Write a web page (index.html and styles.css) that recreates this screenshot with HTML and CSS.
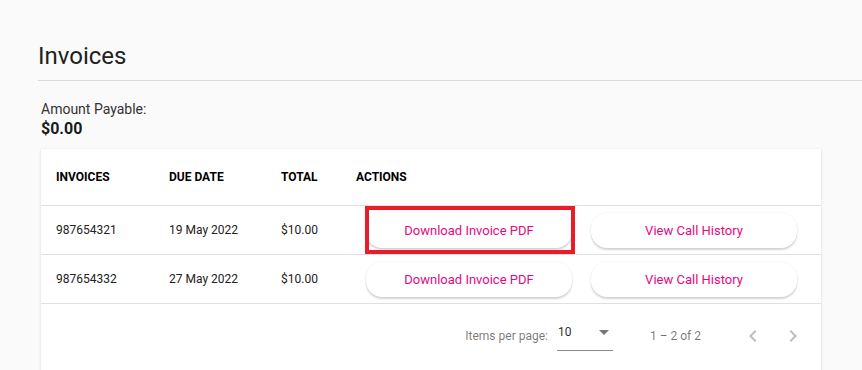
FILE: index.html
```html
<!DOCTYPE html>
<html lang="en">
<head>
<meta charset="utf-8">
<title>Invoices</title>
<link rel="stylesheet" href="styles.css">
</head>
<body>
<h1 class="page-title">Invoices</h1>
<div class="content">
  <div class="amount-label">Amount Payable:</div>
  <div class="amount-value">$0.00</div>
  <div class="card">
    <table class="invoice-table">
      <thead>
        <tr>
          <th class="col-id">INVOICES</th>
          <th class="col-date">DUE DATE</th>
          <th class="col-total">TOTAL</th>
          <th class="col-actions">ACTIONS</th>
        </tr>
      </thead>
      <tbody>
        <tr>
          <td class="col-id">987654321</td>
          <td class="col-date">19 May 2022</td>
          <td class="col-total">$10.00</td>
          <td class="col-actions">
            <div class="actions">
              <span class="highlight-wrap">
                <button class="pill-btn">Download Invoice PDF</button>
                <span class="highlight"></span>
              </span>
              <button class="pill-btn">View Call History</button>
            </div>
          </td>
        </tr>
        <tr>
          <td class="col-id">987654332</td>
          <td class="col-date">27 May 2022</td>
          <td class="col-total">$10.00</td>
          <td class="col-actions">
            <div class="actions">
              <button class="pill-btn">Download Invoice PDF</button>
              <button class="pill-btn">View Call History</button>
            </div>
          </td>
        </tr>
      </tbody>
    </table>
    <div class="paginator">
      <span class="page-size-label">Items per page:</span>
      <div class="page-size-select">
        <span class="select-value">10</span>
        <span class="select-arrow"></span>
      </div>
      <span class="range-label">1 – 2 of 2</span>
      <button class="nav-btn" aria-label="Previous page">
        <svg viewBox="0 0 24 24" width="24" height="24"><path d="M15.41 7.41L14 6l-6 6 6 6 1.41-1.41L10.83 12z"/></svg>
      </button>
      <button class="nav-btn" aria-label="Next page">
        <svg viewBox="0 0 24 24" width="24" height="24"><path d="M10 6L8.59 7.41 13.17 12l-4.58 4.59L10 18l6-6z"/></svg>
      </button>
    </div>
  </div>
</div>
</body>
</html>
```
FILE: styles.css
```css
* { box-sizing: border-box; }

body {
  margin: 0;
  background: #fafafa;
  font-family: Roboto, "Liberation Sans", Arial, sans-serif;
  color: rgba(0, 0, 0, 0.87);
  height: 370px;
  overflow: hidden;
}

.page-title {
  margin: 40px 0 0 38px;
  padding-bottom: 8px;
  font-size: 24px;
  line-height: 32px;
  font-weight: 400;
  color: #212121;
  border-bottom: 1px solid #dcdcdc;
}

.content {
  margin: 0 41px;
}

.amount-label {
  margin-top: 18px;
  font-size: 14px;
  line-height: 20px;
  color: #333;
}

.amount-value {
  font-size: 16px;
  line-height: 20px;
  font-weight: 700;
  color: #1a1a1a;
}

.card {
  margin-top: 10px;
  background: #fff;
  box-shadow: 0 1px 3px rgba(0, 0, 0, 0.12), 0 1px 1px rgba(0, 0, 0, 0.06);
  padding-bottom: 6px;
}

.invoice-table {
  width: 100%;
  border-collapse: separate;
  border-spacing: 0;
  table-layout: fixed;
}

.invoice-table th,
.invoice-table td {
  padding: 0;
  text-align: left;
  border-bottom: 1px solid #e0e0e0;
}

.invoice-table th {
  height: 57px;
  font-size: 12px;
  font-weight: 700;
  color: #000;
}

.invoice-table td {
  height: 49px;
  font-size: 12px;
  color: #222;
}

.col-id { width: 128px; padding-left: 15px !important; }
.col-date { width: 112px; }
.col-total { width: 75px; }

.actions {
  display: flex;
  gap: 19px;
  padding-left: 10px;
}

.pill-btn {
  width: 206px;
  height: 35px;
  border: none;
  border-radius: 16px;
  background: #fff;
  box-shadow: 0 2px 2px rgba(0, 0, 0, 0.16), 0 0 2px rgba(0, 0, 0, 0.08);
  font-family: Roboto, "Liberation Sans", Arial, sans-serif;
  font-size: 13px;
  color: #e5097f;
  padding: 0;
  cursor: pointer;
}

.highlight-wrap {
  position: relative;
  display: inline-flex;
}

.highlight {
  position: absolute;
  left: -1px;
  right: -3px;
  top: -7px;
  bottom: -6px;
  border: 4px solid #ea1c2a;
  pointer-events: none;
}

.paginator {
  display: flex;
  align-items: center;
  justify-content: flex-end;
  height: 64px;
  padding-right: 8px;
  font-size: 12px;
  color: rgba(0, 0, 0, 0.54);
}

.page-size-label {
  margin-right: 9px;
}

.page-size-select {
  position: relative;
  width: 56px;
  height: 26px;
  margin-top: 4px;
  border-bottom: 1px solid #8a8a8a;
  display: flex;
  align-items: flex-start;
  justify-content: space-between;
}

.select-value {
  padding-left: 1px;
  color: rgba(0, 0, 0, 0.87);
  font-size: 12px;
  line-height: 14px;
}

.select-arrow {
  margin-top: 5px;
  margin-right: 4px;
  width: 0;
  height: 0;
  border-left: 5px solid transparent;
  border-right: 5px solid transparent;
  border-top: 5px solid #757575;
}

.range-label {
  margin: 0 32px 0 37px;
}

.nav-btn {
  width: 40px;
  height: 40px;
  border: none;
  background: transparent;
  padding: 0;
  display: flex;
  align-items: center;
  justify-content: center;
  fill: rgba(0, 0, 0, 0.26);
}
```
